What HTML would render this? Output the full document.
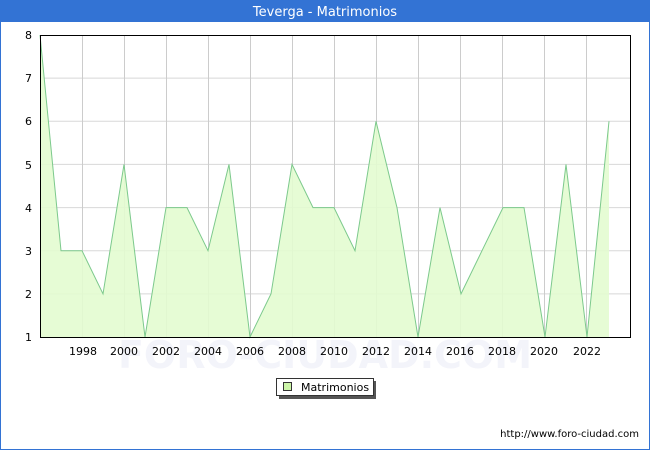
<!DOCTYPE html>
<html><head><meta charset="utf-8"><style>
html,body{margin:0;padding:0;background:#fff;}
svg{display:block;font-family:"DejaVu Sans","Liberation Sans",sans-serif;}
</style></head><body>
<svg width="650" height="450" viewBox="0 0 650 450" xmlns="http://www.w3.org/2000/svg">
<rect x="0" y="0" width="650" height="450" fill="#fff"/>
<rect x="0.5" y="0.5" width="649" height="449" fill="none" stroke="#3373d4"/>
<rect x="0" y="0" width="650" height="22" fill="#3373d4"/>
<text x="325" y="16" fill="#fff" font-size="13" text-anchor="middle">Teverga - Matrimonios</text>
<g stroke="#d8d8d8" stroke-width="1">
<line x1="40" y1="293.9" x2="630" y2="293.9"/><line x1="40" y1="250.7" x2="630" y2="250.7"/>
<line x1="40" y1="207.6" x2="630" y2="207.6"/><line x1="40" y1="164.4" x2="630" y2="164.4"/>
<line x1="40" y1="121.3" x2="630" y2="121.3"/><line x1="40" y1="78.1" x2="630" y2="78.1"/>
</g>
<g stroke="#cccccc" stroke-width="1">
<line x1="82.5" y1="35" x2="82.5" y2="337"/><line x1="124.5" y1="35" x2="124.5" y2="337"/>
<line x1="166.5" y1="35" x2="166.5" y2="337"/><line x1="208.5" y1="35" x2="208.5" y2="337"/>
<line x1="250.5" y1="35" x2="250.5" y2="337"/><line x1="292.5" y1="35" x2="292.5" y2="337"/>
<line x1="334.5" y1="35" x2="334.5" y2="337"/><line x1="376.5" y1="35" x2="376.5" y2="337"/>
<line x1="418.5" y1="35" x2="418.5" y2="337"/><line x1="460.5" y1="35" x2="460.5" y2="337"/>
<line x1="502.5" y1="35" x2="502.5" y2="337"/><line x1="544.5" y1="35" x2="544.5" y2="337"/>
<line x1="586.5" y1="35" x2="586.5" y2="337"/>
</g>
<text x="325" y="368" fill="#f3f4fa" font-size="38" text-anchor="middle" font-weight="bold">FORO-CIUDAD.COM</text>
<polygon fill="#e3fcd0" fill-opacity="0.9" points="40,337 40,35 61,250.7 82,250.7 103,293.9 124,164.4 145,337 166,207.6 187,207.6 208,250.7 229,164.4 250,337 271,293.9 292,164.4 313,207.6 334,207.6 355,250.7 376,121.3 397,207.6 418,337 440,207.6 461,293.9 482,250.7 503,207.6 524,207.6 545,337 566,164.4 587,337 609,121.3 609,337"/>
<polyline fill="none" stroke="#7cc98c" stroke-width="1" points="40,35 61,250.7 82,250.7 103,293.9 124,164.4 145,337 166,207.6 187,207.6 208,250.7 229,164.4 250,337 271,293.9 292,164.4 313,207.6 334,207.6 355,250.7 376,121.3 397,207.6 418,337 440,207.6 461,293.9 482,250.7 503,207.6 524,207.6 545,337 566,164.4 587,337 609,121.3"/>
<rect x="40.5" y="35.5" width="590" height="302" fill="none" stroke="#000"/>
<g font-size="11" fill="#000" text-anchor="end">
<text x="32" y="341">1</text><text x="32" y="298">2</text><text x="32" y="255">3</text>
<text x="32" y="212">4</text><text x="32" y="169">5</text><text x="32" y="125">6</text>
<text x="32" y="82">7</text><text x="32" y="39">8</text>
</g>
<g font-size="11" fill="#000" text-anchor="middle">
<text x="83" y="355">1998</text><text x="124" y="355">2000</text><text x="166" y="355">2002</text>
<text x="208" y="355">2004</text><text x="250" y="355">2006</text><text x="292" y="355">2008</text>
<text x="334" y="355">2010</text><text x="376" y="355">2012</text><text x="418" y="355">2014</text>
<text x="460" y="355">2016</text><text x="502" y="355">2018</text><text x="544" y="355">2020</text>
<text x="587" y="355">2022</text>
</g>
<rect x="279" y="381" width="97" height="18" fill="#555"/>
<rect x="276.5" y="378.5" width="97" height="17" fill="#fff" stroke="#333"/>
<rect x="283.5" y="382.5" width="8" height="8" fill="#ccf5a8" stroke="#333"/>
<text x="301" y="391" font-size="11" fill="#000">Matrimonios</text>
<text x="639" y="437" font-size="10" fill="#000" text-anchor="end">http://www.foro-ciudad.com</text>
</svg>
</body></html>
